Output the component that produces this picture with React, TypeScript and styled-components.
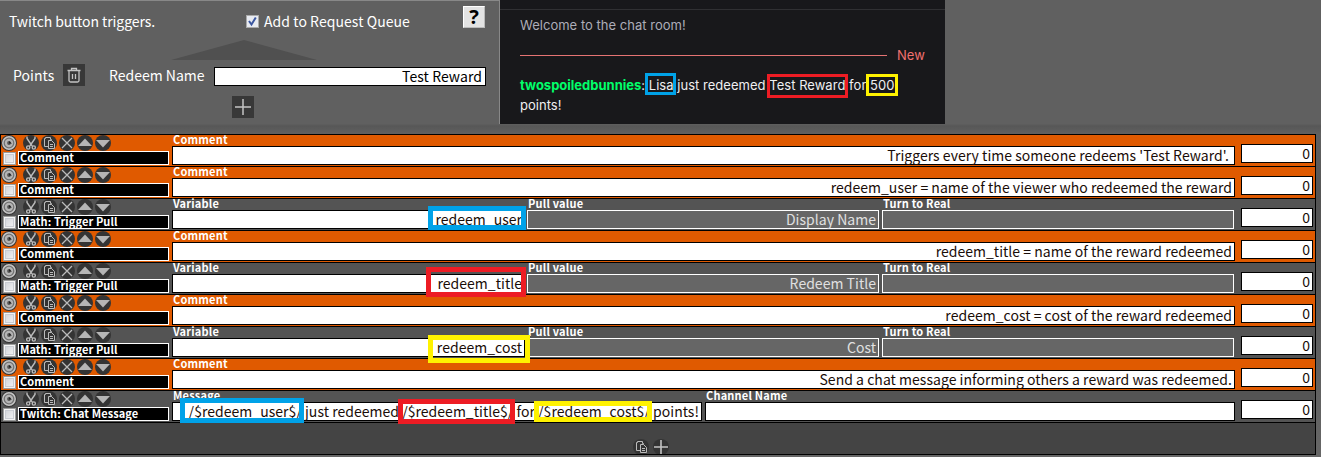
import React from 'react';
import styled, { createGlobalStyle } from 'styled-components';

const Global = createGlobalStyle`
  * { box-sizing: border-box; }
  body { margin: 0; background: #5f5f5f; overflow: hidden; }
`;

const BLUE = '#00a2e8';
const RED = '#ed1c24';
const YELLOW = '#fff200';

const Page = styled.div`
  width: 1321px;
  height: 457px;
  overflow: hidden;
  background: linear-gradient(#636363 0, #5f5f5f 124px, #575757 126px, #606060 134px, #545454 200px, #666 457px);
  font-family: 'Noto Sans CJK SC', 'Noto Sans', sans-serif;
  display: flex;
  flex-direction: column;
`;

const Top = styled.div`
  display: flex;
  height: 124px;
  margin-bottom: 10px;
  background: #606060;
`;

const Triggers = styled.section`
  width: 500px;
  height: 124px;
  border-top: 1px solid #888;
  border-right: 1px solid #888;
  background: #606060;
  color: #fff;
  font-size: 14px;
  line-height: 20px;
  letter-spacing: 0.06px;
  white-space: pre;
`;

const TriggerHeader = styled.div`
  display: flex;
  height: 39px;
  padding: 5px 14px 0 9px;
`;

const TriggerTitle = styled.div`
  width: 237px;
  margin-top: 5px;
  letter-spacing: -0.08px;
`;

const QueueOption = styled.label`
  display: flex;
  flex: 1;
  height: 20px;
  gap: 5px;
  margin-top: 5px;
`;

const CheckIcon = styled.svg`
  width: 13px;
  height: 13px;
  margin-top: 4px;
  flex: none;
`;

const HelpButton = styled.button`
  width: 22px;
  height: 22px;
  padding: 0;
  border: 1px solid;
  border-color: #fff #bbb #bbb #fff;
  background: #e3e3e3;
  color: #000;
  font: bold 20px/20px 'Noto Sans', sans-serif;
`;

const Pointer = styled.svg`
  display: block;
  width: 146px;
  height: 20px;
  margin-left: 171px;
`;

const RedeemRow = styled.div`
  display: flex;
  align-items: center;
  height: 30px;
  padding: 0 13px 0 13px;
`;

const PointsLabel = styled.div`
  width: 50px;
  flex: none;
`;

const RedeemLabel = styled.div`
  width: 105px;
  margin-left: 24px;
  flex: none;
  letter-spacing: 0;
`;

const SquareButton = styled.button`
  width: 22px;
  height: 22px;
  padding: 0;
  border: 0;
  flex: none;
  background: #383838;
  svg { display: block; }
`;

const RedeemInput = styled.div`
  height: 19px;
  flex: 1;
  margin-top: 2px;
  border: 1px solid #000;
  background: #fff;
  color: #000;
  text-align: right;
  line-height: 17px;
  padding-right: 3px;
`;

const AddRow = styled.div`
  padding: 6px 0 0 232px;
`;

const Chat = styled.section`
  width: 445px;
  height: 124px;
  background: #18181b;
  padding: 9px 20px 0;
  font: 13px/20px Inter, sans-serif;
  color: #efeff1;
`;

const ChatRule = styled.div`
  height: 1px;
  margin: 0 -20px;
  background: #303033;
`;

const Welcome = styled.div`
  color: #adadb8;
  margin-top: 5px;
  letter-spacing: 0.02px;
`;

const NewDivider = styled.div`
  display: flex;
  align-items: center;
  gap: 10px;
  height: 20px;
  margin-top: 10px;
  color: #f0706f;
  &::before { content: ''; width: 367px; height: 1px; background: #e57373; }
`;

const ChatLine = styled.div`
  margin-top: 10px;
  white-space: pre;
  letter-spacing: 0.03px;
  b { color: #00ff6a; letter-spacing: 0; }
`;

const Marked = styled.span`
  position: relative;
`;

const Highlight = styled.i<{ $c: string; $l: number; $t: number; $w: number; $h: number; $b?: number }>`
  position: absolute;
  z-index: 2;
  left: ${p => p.$l}px;
  top: ${p => p.$t}px;
  width: ${p => p.$w}px;
  height: ${p => p.$h}px;
  border: ${p => p.$b ?? 5}px solid ${p => p.$c};
`;

const Table = styled.main`
  width: 1316px;
  height: 321px;
  border: 1px solid #000;
  border-top: 0;
  background: #444;
`;

const Row = styled.div<{ $orange?: boolean }>`
  display: flex;
  height: 32px;
  border-top: 1px solid #000;
  background: ${p => (p.$orange ? '#e05a00' : '#545454')};
`;

const Command = styled.div`
  width: 171px;
  flex: none;
`;

const Tools = styled.div`
  display: flex;
  height: 16px;
  svg { flex: none; }
  svg:first-child { margin-right: 6px; }
  svg + svg { margin-right: 2px; }
`;

const NameLine = styled.div`
  display: flex;
  gap: 2px;
  padding-left: 2px;
`;

const Check = styled.span`
  width: 13px;
  height: 13px;
  margin-top: 1px;
  border: 1px solid #9a9b9b;
  background: linear-gradient(135deg, #cdd0d5, #f6f6f6);
  box-shadow: inset 0 0 0 1px #f4f4f4, inset 0 0 0 2px #c9ccd2;
`;

const Name = styled.div`
  width: 151px;
  height: 14px;
  border: 1px solid #fff;
  background: #000;
  color: #fff;
  font-weight: 700;
  font-size: 11px;
  letter-spacing: 0.1px;
  line-height: 10px;
  padding-left: 1px;
  white-space: pre;
`;

const Column = styled.div<{ $w: number; $gap: number }>`
  width: ${p => p.$w}px;
  margin-right: ${p => p.$gap}px;
  flex: none;
`;

const Caption = styled.div`
  height: 11px;
  padding-left: 1px;
  color: #fff;
  font-weight: 700;
  font-size: 11px;
  letter-spacing: 0.2px;
  line-height: 8px;
  white-space: pre;
`;

const Field = styled.div<{ $grey?: boolean }>`
  position: relative;
  height: 19px;
  border: 1px solid ${p => (p.$grey ? '#fff' : '#000')};
  background: ${p => (p.$grey ? '#666' : '#fff')};
  color: ${p => (p.$grey ? '#e0e0e0' : '#1a0d08')};
  font-size: 14px;
  letter-spacing: 0.03px;
  line-height: 16px;
  text-align: right;
  padding-right: 2px;
  white-space: pre;
`;

const Count = styled(Field)`
  width: 72px;
  margin: 9px 2px 0 auto;
  padding-right: 2px;
`;

const Footer = styled.div`
  display: flex;
  gap: 4px;
  height: 32px;
  border-top: 1px solid #000;
  padding: 16px 0 0 632px;
  overflow: hidden;
`;

type Kind = 'dial' | 'cut' | 'copy' | 'x' | 'up' | 'down' | 'plus';

const shapes: Record<Kind, React.ReactNode> = {
  dial: (
    <>
      <circle cx="8" cy="8" r="6.200" fill="#707070" stroke="#c4c4c4" strokeWidth="1.500" />
      <circle cx="8" cy="8" r="4.200" fill="#b4b4b4" />
      <circle cx="8" cy="8" r="1.900" fill="#555" />
      <path d="M8 6v2.500h3z" fill="#222" />
    </>
  ),
  cut: (
    <g fill="none" stroke="#bbb" strokeWidth="1.4">
      <path d="M4 1.5v2L9.2 11M12 1.5v2L6.8 11" />
      <circle cx="5.2" cy="12.5" r="1.6" />
      <circle cx="10.8" cy="12.5" r="1.6" />
    </g>
  ),
  copy: (
    <g fill="#333" stroke="#bbb">
      <path d="M3.5 11.5v-8h1v-1h5v2h1v7z" />
      <path d="M7.5 5.5h3l3 3v5h-6z" />
      <path d="M9 9.5h3M9 11.5h3" />
    </g>
  ),
  x: <path d="M3 3l10 10M13 3L3 13" stroke="#bbb" strokeWidth="1.3" />,
  up: <path d="M8 3.5L15 11H1z" fill="#b5b5b5" />,
  down: <path d="M1 5h14L8 12.5z" fill="#b5b5b5" />,
  plus: <path d="M8 1v14M1 8h14" stroke="#c4c4c4" strokeWidth="1.6" />,
};

const Icon = ({ kind }: { kind: Kind }) => (
  <svg width="16" height="16" viewBox="0 0 16 16">
    <circle cx="8" cy="8" r="8" fill="#343434" />
    {shapes[kind]}
  </svg>
);

const toolKinds: Kind[] = ['dial', 'cut', 'copy', 'x', 'up', 'down'];

type Mark = { c: string; l: number; t: number; w: number; h: number };
type Cell = { caption: string; text?: string; w: number; gap: number; grey?: boolean; marks?: Mark[] };
type Entry = { name: string; cells: Cell[] };

const comment = (text: string): Entry => ({
  name: 'Comment',
  cells: [{ caption: 'Comment', text, w: 1063, gap: 0 }],
});

const pull = (variable: string, value: string, mark: Mark): Entry => ({
  name: 'Math: Trigger Pull',
  cells: [
    { caption: 'Variable', text: variable, w: 353, gap: 2, marks: [mark] },
    { caption: 'Pull value', text: value, w: 352, gap: 3, grey: true },
    { caption: 'Turn to Real', w: 352, gap: 0, grey: true },
  ],
});

const entries: Entry[] = [
  comment("Triggers every time someone redeems 'Test Reward'. "),
  comment('redeem_user = name of the viewer who redeemed the reward'),
  pull('redeem_user', 'Display Name', { c: BLUE, l: 255, t: -5, w: 98, h: 24 }),
  comment('redeem_title = name of the reward redeemed'),
  pull('redeem_title', 'Redeem Title', { c: RED, l: 253, t: -8, w: 100, h: 30 }),
  comment('redeem_cost = cost of the reward redeemed'),
  pull('redeem_cost', 'Cost', { c: YELLOW, l: 255, t: -4, w: 102, h: 28 }),
  comment('Send a chat message informing others a reward was redeemed.'),
  {
    name: 'Twitch: Chat Message',
    cells: [
      {
        caption: 'Message',
        text: '/$redeem_user$/ just redeemed /$redeem_title$/ for /$redeem_cost$/ points!',
        w: 530,
        gap: 3,
        marks: [
          { c: BLUE, l: 7, t: -5, w: 124, h: 25 },
          { c: RED, l: 225, t: -4, w: 117, h: 25 },
          { c: YELLOW, l: 361, t: -2, w: 118, h: 21 },
        ],
      },
      { caption: 'Channel Name', w: 530, gap: 0 },
    ],
  },
];

export default function App() {
  return (
    <Page>
      <Global />
      <Top>
        <Triggers>
          <TriggerHeader>
            <TriggerTitle>Twitch button triggers.</TriggerTitle>
            <QueueOption>
              <CheckIcon viewBox="0 0 13 13">
                <rect x=".5" y=".5" width="12" height="12" fill="#e8ebf2" stroke="#aaa" />
                <path d="M3 6l2.500 3.500L9.800 2.500" fill="none" stroke="#3a56a0" strokeWidth="2" />
              </CheckIcon>
              <span>Add to Request Queue</span>
            </QueueOption>
            <HelpButton>?</HelpButton>
          </TriggerHeader>
          <Pointer viewBox="0 0 146 20">
            <path d="M0 20L73 0l73 20z" fill="#505050" />
          </Pointer>
          <RedeemRow>
            <PointsLabel>Points</PointsLabel>
            <SquareButton>
              <svg width="22" height="22" viewBox="0 0 22 22" fill="none" stroke="#c4c4c4">
                <path d="M4.5 6.5h13M8.5 6V4.5h5V6M6 7v9.500q0 1.500 1.500 1.500h7q1.500 0 1.500-1.500V7M9.500 10v5M12.500 10v5" strokeWidth="1.300" />
              </svg>
            </SquareButton>
            <RedeemLabel>Redeem Name</RedeemLabel>
            <RedeemInput>Test Reward</RedeemInput>
          </RedeemRow>
          <AddRow>
            <SquareButton>
              <svg width="22" height="22" viewBox="0 0 22 22">
                <path d="M11 3v16M3 11h16" stroke="#c4c4c4" strokeWidth="1.500" />
              </svg>
            </SquareButton>
          </AddRow>
        </Triggers>
        <Chat>
          <ChatRule />
          <Welcome>Welcome to the chat room!</Welcome>
          <NewDivider>New</NewDivider>
          <ChatLine>
            <b>twospoiledbunnies</b>:{' '}
            <Marked>Lisa<Highlight $c={BLUE} $l={-4} $t={-4} $w={31} $h={22} $b={3} /></Marked>
            {' just redeemed '}
            <Marked>Test Reward<Highlight $c={RED} $l={-2} $t={-3} $w={81} $h={24} $b={3} /></Marked>
            {' for '}
            <Marked>500<Highlight $c={YELLOW} $l={-4} $t={-3} $w={32} $h={22} $b={3} /></Marked>
            {'\npoints!'}
          </ChatLine>
        </Chat>
      </Top>
      <Table>
        {entries.map((e, i) => (
          <Row key={i} $orange={e.name === 'Comment'}>
            <Command>
              <Tools>{toolKinds.map(k => <Icon key={k} kind={k} />)}</Tools>
              <NameLine><Check /><Name>{e.name}</Name></NameLine>
            </Command>
            {e.cells.map(c => (
              <Column key={c.caption} $w={c.w} $gap={c.gap}>
                <Caption>{c.caption}</Caption>
                <Field $grey={c.grey}>
                  {c.text}
                  {c.marks?.map(m => (
                    <Highlight key={m.l} $c={m.c} $l={m.l} $t={m.t} $w={m.w} $h={m.h} />
                  ))}
                </Field>
              </Column>
            ))}
            <Count>0</Count>
          </Row>
        ))}
        <Footer><Icon kind="copy" /><Icon kind="plus" /></Footer>
      </Table>
    </Page>
  );
}
